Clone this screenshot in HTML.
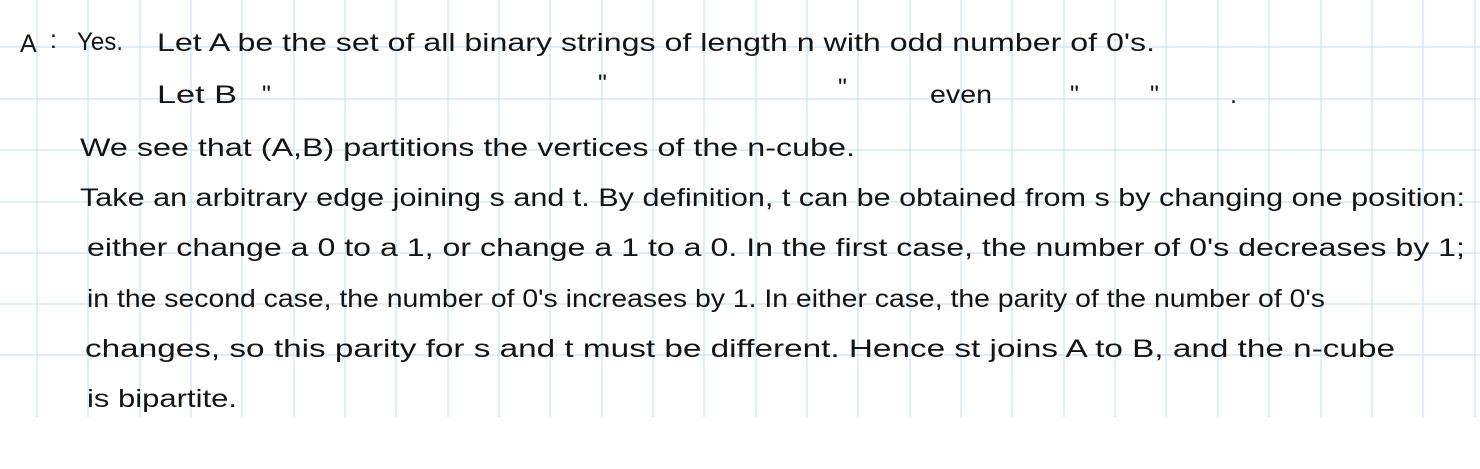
<!DOCTYPE html>
<html><head><meta charset="utf-8"><style>
html,body{margin:0;padding:0;background:#fff;}
svg{display:block;}
text{font-family:"Liberation Sans",sans-serif;font-size:25px;fill:#141414;}
</style></head><body>
<svg width="1480" height="469" viewBox="0 0 1480 469" xmlns="http://www.w3.org/2000/svg">
<g stroke="#cfe2ef" stroke-width="1.2">
<line x1="0" y1="47" x2="1480" y2="47"/>
<line x1="0" y1="99" x2="1480" y2="99"/>
<line x1="0" y1="150" x2="1480" y2="150"/>
<line x1="0" y1="202" x2="1480" y2="202"/>
<line x1="0" y1="253" x2="1480" y2="253"/>
<line x1="0" y1="304" x2="1480" y2="304"/>
<line x1="0" y1="355" x2="1480" y2="355"/>
<line x1="37" y1="0" x2="37" y2="417"/><line x1="88" y1="0" x2="88" y2="417"/><line x1="140" y1="0" x2="140" y2="417"/><line x1="191" y1="0" x2="191" y2="417"/><line x1="242" y1="0" x2="242" y2="417"/><line x1="294" y1="0" x2="294" y2="417"/><line x1="345" y1="0" x2="345" y2="417"/><line x1="396" y1="0" x2="396" y2="417"/><line x1="448" y1="0" x2="448" y2="417"/><line x1="499" y1="0" x2="499" y2="417"/><line x1="550" y1="0" x2="550" y2="417"/><line x1="602" y1="0" x2="602" y2="417"/><line x1="653" y1="0" x2="653" y2="417"/><line x1="704" y1="0" x2="704" y2="417"/><line x1="756" y1="0" x2="756" y2="417"/><line x1="807" y1="0" x2="807" y2="417"/><line x1="858" y1="0" x2="858" y2="417"/><line x1="910" y1="0" x2="910" y2="417"/><line x1="961" y1="0" x2="961" y2="417"/><line x1="1012" y1="0" x2="1012" y2="417"/><line x1="1064" y1="0" x2="1064" y2="417"/><line x1="1115" y1="0" x2="1115" y2="417"/><line x1="1166" y1="0" x2="1166" y2="417"/><line x1="1218" y1="0" x2="1218" y2="417"/><line x1="1269" y1="0" x2="1269" y2="417"/><line x1="1321" y1="0" x2="1321" y2="417"/><line x1="1372" y1="0" x2="1372" y2="417"/><line x1="1423" y1="0" x2="1423" y2="417"/><line x1="1475" y1="0" x2="1475" y2="417"/>
</g>
<text x="20" y="52" font-size="32">A</text>
<text x="50" y="48">:</text>
<text x="77" y="50" textLength="46" lengthAdjust="spacingAndGlyphs">Yes.</text>
<text x="157" y="51" textLength="998" lengthAdjust="spacingAndGlyphs">Let A be the set of all binary strings of length n with odd number of 0's.</text>
<text x="157" y="103" textLength="80" lengthAdjust="spacingAndGlyphs">Let B</text>
<text x="262" y="103">"</text><text x="598" y="92">"</text><text x="838" y="96">"</text>
<text x="930" y="103" textLength="62" lengthAdjust="spacingAndGlyphs">even</text>
<text x="1070" y="103">"</text><text x="1150" y="103">"</text><text x="1230" y="103">.</text>
<text x="80" y="156" textLength="775" lengthAdjust="spacingAndGlyphs">We see that (A,B) partitions the vertices of the n-cube.</text>
<text x="80" y="206" textLength="1385" lengthAdjust="spacingAndGlyphs">Take an arbitrary edge joining s and t. By definition, t can be obtained from s by changing one position:</text>
<text x="87" y="256" textLength="1378" lengthAdjust="spacingAndGlyphs">either change a 0 to a 1, or change a 1 to a 0. In the first case, the number of 0's decreases by 1;</text>
<text x="87" y="307" textLength="1238" lengthAdjust="spacingAndGlyphs">in the second case, the number of 0's increases by 1. In either case, the parity of the number of 0's</text>
<text x="85" y="357" textLength="1310" lengthAdjust="spacingAndGlyphs">changes, so this parity for s and t must be different. Hence st joins A to B, and the n-cube</text>
<text x="87" y="407" textLength="150" lengthAdjust="spacingAndGlyphs">is bipartite.</text>
</svg>
</body></html>
